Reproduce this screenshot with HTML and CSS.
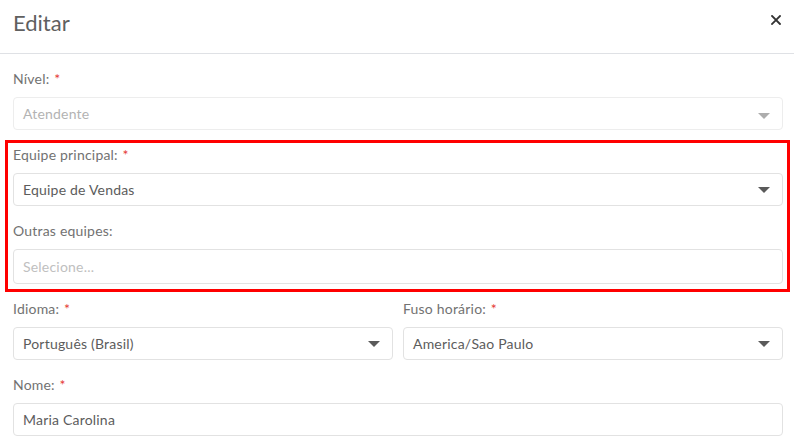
FILE: index.html
```html
<!DOCTYPE html>
<html lang="pt-BR">
<head>
<meta charset="utf-8">
<title>Editar</title>
<link rel="stylesheet" href="styles.css">
</head>
<body>
<div class="modal">
  <div class="modal-header">
    <h1 class="modal-title">Editar</h1>
    <svg class="close" width="10" height="10" viewBox="0 0 10 10" aria-label="Fechar">
      <path d="M1 1 L9 9 M9 1 L1 9" stroke="#333" stroke-width="1.8" stroke-linecap="square" fill="none"/>
    </svg>
  </div>
  <div class="modal-body">
    <div class="group">
      <label class="label">Nível: <span class="req">*</span></label>
      <div class="select disabled"><span class="value">Atendente</span><span class="caret"></span></div>
    </div>

    <div class="highlight">
      <div class="group">
        <label class="label">Equipe principal: <span class="req">*</span></label>
        <div class="select"><span class="value">Equipe de Vendas</span><span class="caret"></span></div>
      </div>
      <div class="group last">
        <label class="label">Outras equipes:</label>
        <div class="select multi"><span class="placeholder">Selecione...</span></div>
      </div>
    </div>

    <div class="row">
      <div class="group">
        <label class="label">Idioma: <span class="req">*</span></label>
        <div class="select"><span class="value">Português (Brasil)</span><span class="caret"></span></div>
      </div>
      <div class="group">
        <label class="label">Fuso horário: <span class="req">*</span></label>
        <div class="select"><span class="value">America/Sao Paulo</span><span class="caret"></span></div>
      </div>
    </div>

    <div class="group">
      <label class="label">Nome: <span class="req">*</span></label>
      <div class="select"><span class="value">Maria Carolina</span></div>
    </div>
  </div>
</div>
</body>
</html>
```
FILE: styles.css
```css
* { box-sizing: border-box; }
html, body {
  margin: 0;
  padding: 0;
  background: #fff;
}
body {
  font-family: Lato, "Open Sans", "Liberation Sans", sans-serif;
  font-size: 14px;
  line-height: 21px;
  letter-spacing: 0.2px;
  color: #5c5c5c;
  width: 794px;
  height: 446px;
  overflow: hidden;
}
.modal-header {
  display: flex;
  justify-content: space-between;
  align-items: flex-start;
  padding: 6px 13px 14px 13px;
  border-bottom: 1px solid #dfe1e5;
  height: 54px;
}
.modal-title {
  margin: 0;
  font-size: 22px;
  line-height: 33px;
  font-weight: 400;
  letter-spacing: 0;
  color: #606060;
}
.close {
  margin-top: 9px;
  display: block;
}
.modal-body {
  padding: 14px 11px 0 13px;
}
.group {
  margin-bottom: 14px;
}
.group.last {
  margin-bottom: 0;
}
.label {
  display: block;
  color: #727272;
  margin-bottom: 8px;
}
.req {
  color: #e53935;
  margin-left: 1px;
}
.select {
  display: flex;
  align-items: center;
  justify-content: space-between;
  height: 33px;
  padding: 0 12px 0 9px;
  border: 1px solid #e2e2e2;
  border-radius: 4px;
  background: #fff;
  color: #5c5c5c;
}
.select.multi {
  height: 35px;
}
.select.disabled {
  border-color: #ededed;
  color: #b3b3b3;
}
.placeholder {
  color: #c0c0c0;
}
.caret {
  width: 0;
  height: 0;
  border-left: 6px solid transparent;
  border-right: 6px solid transparent;
  border-top: 6px solid #5a5a5a;
}
.select.disabled .caret {
  border-top-color: #adadad;
  margin-top: 4px;
}
.highlight {
  margin: -4px -7px 6px -8px;
  padding: 1px 4px 5px 5px;
  border: 3px solid #ff0000;
}
.row {
  display: grid;
  grid-template-columns: 1fr 1fr;
  column-gap: 10px;
}
```
